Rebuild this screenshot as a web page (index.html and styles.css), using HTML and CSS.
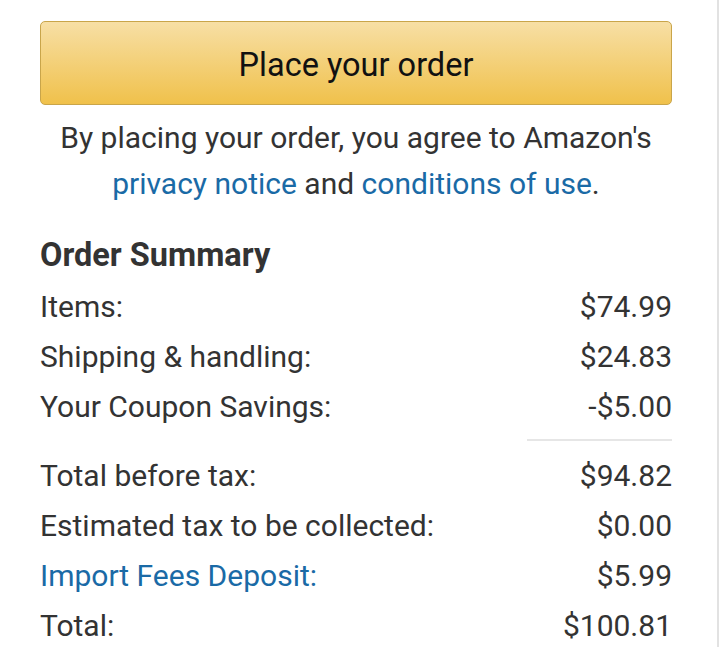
FILE: index.html
```html
<!DOCTYPE html>
<html>
<head>
<meta charset="utf-8">
<link rel="stylesheet" href="styles.css">
</head>
<body>
<div class="page">
  <div class="content">
    <button class="place-btn">Place your order</button>
    <p class="agree">By placing your order, you agree to Amazon's<br><a href="#">privacy notice</a> and <a href="#">conditions of use</a>.</p>
    <h2 class="title">Order Summary</h2>
    <div class="rows">
      <div class="row"><span>Items:</span><span>$74.99</span></div>
      <div class="row"><span>Shipping &amp; handling:</span><span>$24.83</span></div>
      <div class="row"><span>Your Coupon Savings:</span><span>-$5.00</span></div>
      <div class="divider"></div>
      <div class="row"><span>Total before tax:</span><span>$94.82</span></div>
      <div class="row"><span>Estimated tax to be collected:</span><span>$0.00</span></div>
      <div class="row"><a href="#">Import Fees Deposit:</a><span>$5.99</span></div>
      <div class="row"><span>Total:</span><span>$100.81</span></div>
    </div>
  </div>
</div>
</body>
</html>
```

FILE: styles.css
```css
html, body {
  margin: 0;
  padding: 0;
  background: #fff;
}
body {
  font-family: Roboto, "Liberation Sans", sans-serif;
  color: #333;
}
.page {
  width: 717px;
  height: 647px;
  border-right: 2px solid #e2e2e2;
  overflow: hidden;
}
.content {
  padding: 21px 45px 0 40px;
}
.place-btn {
  display: block;
  width: 632px;
  height: 84px;
  border: 1px solid #c9a54a;
  border-radius: 5px;
  background: linear-gradient(to bottom, #f7dfa5, #f0c14b);
  font-family: Roboto, "Liberation Sans", sans-serif;
  font-size: 32.5px;
  color: #111;
  padding: 4px 0 0 0;
  margin: 0;
}
.agree {
  margin: 10px 0 0 0;
  text-align: center;
  font-size: 30px;
  line-height: 46px;
  color: #333;
}
a {
  color: #1a6aa6;
  text-decoration: none;
}
.title {
  margin: 25px 0 4px 0;
  font-size: 32.5px;
  font-weight: 700;
  line-height: 46px;
  color: #333;
}
.rows {
  display: flex;
  flex-direction: column;
}
.row {
  display: flex;
  justify-content: space-between;
  font-size: 30px;
  line-height: 50px;
}
.divider {
  align-self: flex-end;
  width: 145px;
  height: 2px;
  background: #e6e6e6;
  margin: 7px 0 10px 0;
}
```
